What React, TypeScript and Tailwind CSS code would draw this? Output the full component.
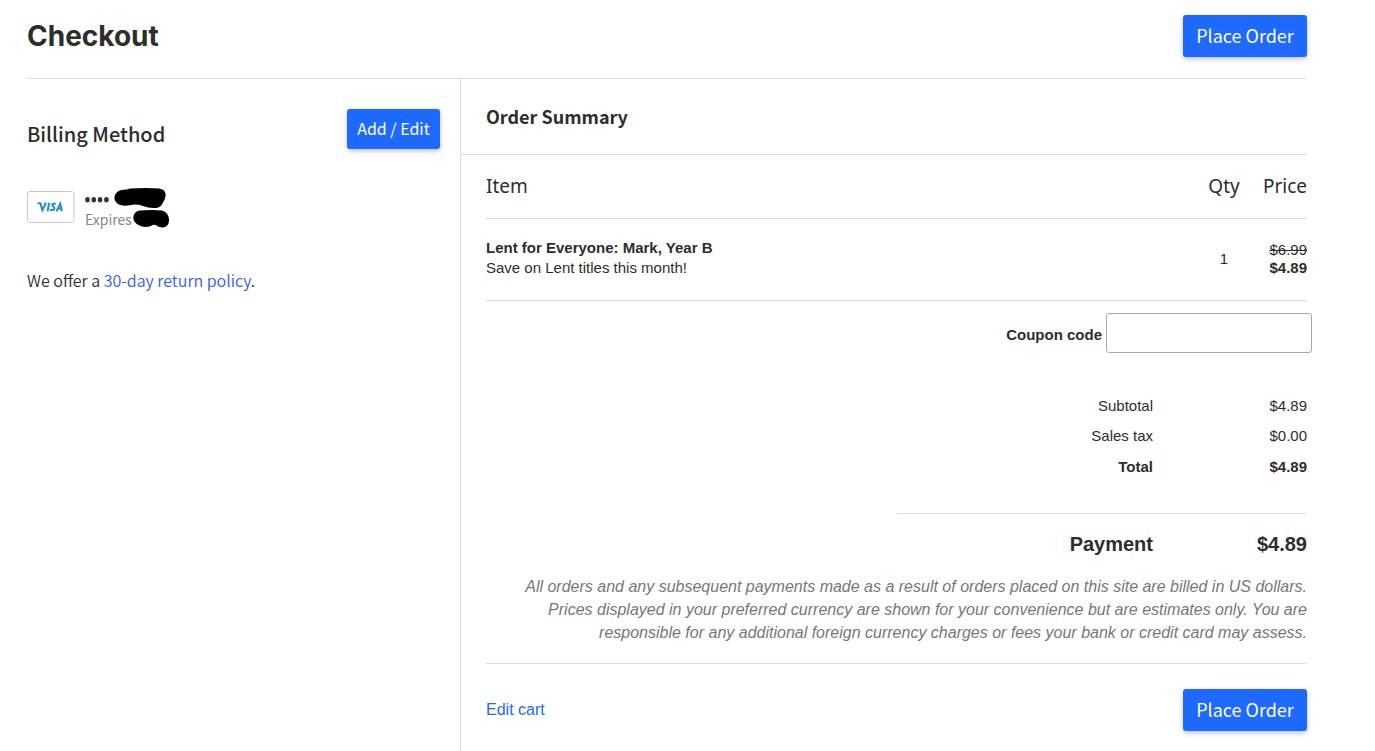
import React from "react";

const sourceFont = "font-['Noto_Sans_CJK_SC','Noto_Sans',sans-serif]";

function PlaceOrderButton() {
  return (
    <button
      type="button"
      className={`${sourceFont} h-[42px] w-[124px] rounded-[3px] bg-[#1e69ff] pb-0.5 text-lg leading-6 text-white shadow-[0_2px_5px_rgba(0,0,0,0.25)]`}
    >
      Place Order
    </button>
  );
}

function VisaCard() {
  return (
    <svg width="48" height="32" viewBox="0 0 48 32" role="img" aria-label="Visa">
      <rect x="0.5" y="0.5" width="46.5" height="31" rx="2.5" fill="#fff" stroke="#c8c8c8" />
      <g fill="none" stroke="#1e8fd5" strokeWidth="2" strokeLinejoin="miter">
        <path d="M10.500 12.300H13.400L15.300 19.300L19 11.800" />
        <path d="M22.200 11.800L20.600 20.200" />
        <path d="M28.700 13.100C27 12.300 25.200 12.700 25.200 14C25.200 15.600 27.600 15.600 27.400 17.400C27.200 19.300 25 19.600 23 18.800" />
        <path d="M29.500 20.200L33.300 12.700L34.800 20.200" />
        <path d="M31 17.900H34.300" strokeWidth="1.500" />
      </g>
    </svg>
  );
}

function BillingPanel() {
  return (
    <aside className="w-[434px] shrink-0 border-r border-[#dcdcdc] pr-5">
      <div className="flex justify-between pt-[30px]">
        <h2 className={`${sourceFont} pt-[11px] text-xl leading-7 font-medium`}>Billing Method</h2>
        <button
          type="button"
          className={`${sourceFont} h-10 w-[93px] rounded-[3px] bg-[#1e69ff] pb-0.5 text-base leading-6 text-white shadow-[0_2px_5px_rgba(0,0,0,0.25)]`}
        >
          Add / Edit
        </button>
      </div>
      <div className="mt-[38px] flex items-start gap-2.5">
        <div className="pt-1">
          <VisaCard />
        </div>
        <div>
          <div className="flex h-[22px] items-start gap-[5px]">
            <svg width="24" height="22" viewBox="0 0 24 22" fill="#333" aria-hidden="true">
              <ellipse cx="2.5" cy="12.800" rx="2.300" ry="2.700" />
              <ellipse cx="8.800" cy="12.800" rx="2.300" ry="2.700" />
              <ellipse cx="15.100" cy="12.800" rx="2.300" ry="2.700" />
              <ellipse cx="21.400" cy="12.800" rx="2.300" ry="2.700" />
            </svg>
            <svg width="53" height="22" viewBox="0 0 53 22" aria-hidden="true">
              <path d="M9 2.800Q13 2.600 16 1.400Q33 .8 45 1.400Q51.500 2 51.700 8Q51.500 12 49 15.500Q47 20.500 42 20.900Q35 21.400 29 19Q22 16.800 17 18Q9 20 4 17Q0 14 .5 9.500Q1.500 4 9 2.800Z" />
            </svg>
          </div>
          <div className="flex h-5 items-start gap-px">
            <span className={`${sourceFont} text-sm leading-5 text-[#888]`}>Expires</span>
            <svg width="37" height="20" viewBox="0 0 37 20" aria-hidden="true">
              <path d="M7 1.600Q18 .5 29 1.400Q35.500 3.500 36 10Q36.500 17.500 30 18.600Q26 18.700 24 16.800Q21 14.800 18 17Q10 19.500 4.500 15.500Q-.5 12 .5 7Q2 2 7 1.600Z" />
            </svg>
          </div>
        </div>
      </div>
      <p className={`${sourceFont} mt-[39px] text-base leading-6 font-[350]`}>
        We offer a{" "}
        <a href="#return-policy" className="text-[#2e5bff]">
          30-day return policy
        </a>
        .
      </p>
    </aside>
  );
}

function OrderItems() {
  return (
    <table className="w-full border-collapse text-[15px] leading-5">
      <thead>
        <tr className="h-[63px] border-b border-[#dcdcdc] text-[19px] font-['Noto_Sans',sans-serif]">
          <th scope="col" className="text-left font-normal">Item</th>
          <th scope="col" className="w-14 text-center font-normal">Qty</th>
          <th scope="col" className="w-[55px] text-right font-normal">Price</th>
        </tr>
      </thead>
      <tbody>
        <tr className="h-[82px] border-b border-[#dcdcdc]">
          <td className="pb-0.5">
            <div className="font-bold">Lent for Everyone: Mark, Year B</div>
            <div>Save on Lent titles this month!</div>
          </td>
          <td className="text-center">1</td>
          <td className="text-right leading-[18px]">
            <s className="block">$6.99</s>
            <strong className="block">$4.89</strong>
          </td>
        </tr>
      </tbody>
    </table>
  );
}

function Totals() {
  return (
    <table className="ml-auto w-1/2 border-collapse text-right text-[15px] leading-5">
      <tbody>
        <tr className="h-[30px]">
          <th scope="row" className="font-normal">Subtotal</th>
          <td className="w-[154px]">$4.89</td>
        </tr>
        <tr className="h-[30px]">
          <th scope="row" className="font-normal">Sales tax</th>
          <td>$0.00</td>
        </tr>
        <tr className="h-8 font-bold">
          <th scope="row">Total</th>
          <td>$4.89</td>
        </tr>
        <tr aria-hidden="true" className="h-[31px] border-b border-[#dcdcdc]">
          <td colSpan={2} />
        </tr>
        <tr className="h-[60px] text-xl font-bold">
          <th scope="row">Payment</th>
          <td>$4.89</td>
        </tr>
      </tbody>
    </table>
  );
}

export default function App() {
  return (
    <div className="flex min-h-screen max-w-[1307px] flex-col bg-white pl-[27px] font-['Liberation_Sans',Arial,sans-serif] text-[#2d2d2d]">
      <header className="flex justify-between border-b border-[#dcdcdc] pt-[15px] pb-[21px]">
        <h1 className="font-['Inter',sans-serif] text-[28px] leading-[42px] font-bold">Checkout</h1>
        <PlaceOrderButton />
      </header>
      <main className="flex grow">
        <BillingPanel />
        <section className="min-w-0 grow">
          <h2 className={`${sourceFont} border-b border-[#dcdcdc] pt-[25px] pb-[26px] pl-[25px] text-lg leading-6 font-bold`}>
            Order Summary
          </h2>
          <div className="pl-[25px]">
            <OrderItems />
            <div className="-mr-[5px] mt-3 mb-[38px] flex items-center justify-end gap-1 text-[15px]">
              <label htmlFor="coupon" className="pt-1.5 font-bold">Coupon code</label>
              <input id="coupon" type="text" className="h-10 w-[206px] rounded-[3px] border border-[#a9a9a9] bg-white px-3" />
            </div>
            <Totals />
            <p className="pt-px pb-[19px] pl-5 text-right text-base leading-[23px] text-[#777] italic">
              All orders and any subsequent payments made as a result of orders placed on this site are billed in US dollars. Prices displayed in your preferred currency are shown for your convenience but are estimates only. You are responsible for any additional foreign currency charges or fees your bank or credit card may assess.
            </p>
            <div className="flex items-center justify-between border-t border-[#dcdcdc] pt-[25px] pb-5">
              <a href="#cart" className="text-base text-[#1e69ff]">Edit cart</a>
              <PlaceOrderButton />
            </div>
          </div>
        </section>
      </main>
    </div>
  );
}
